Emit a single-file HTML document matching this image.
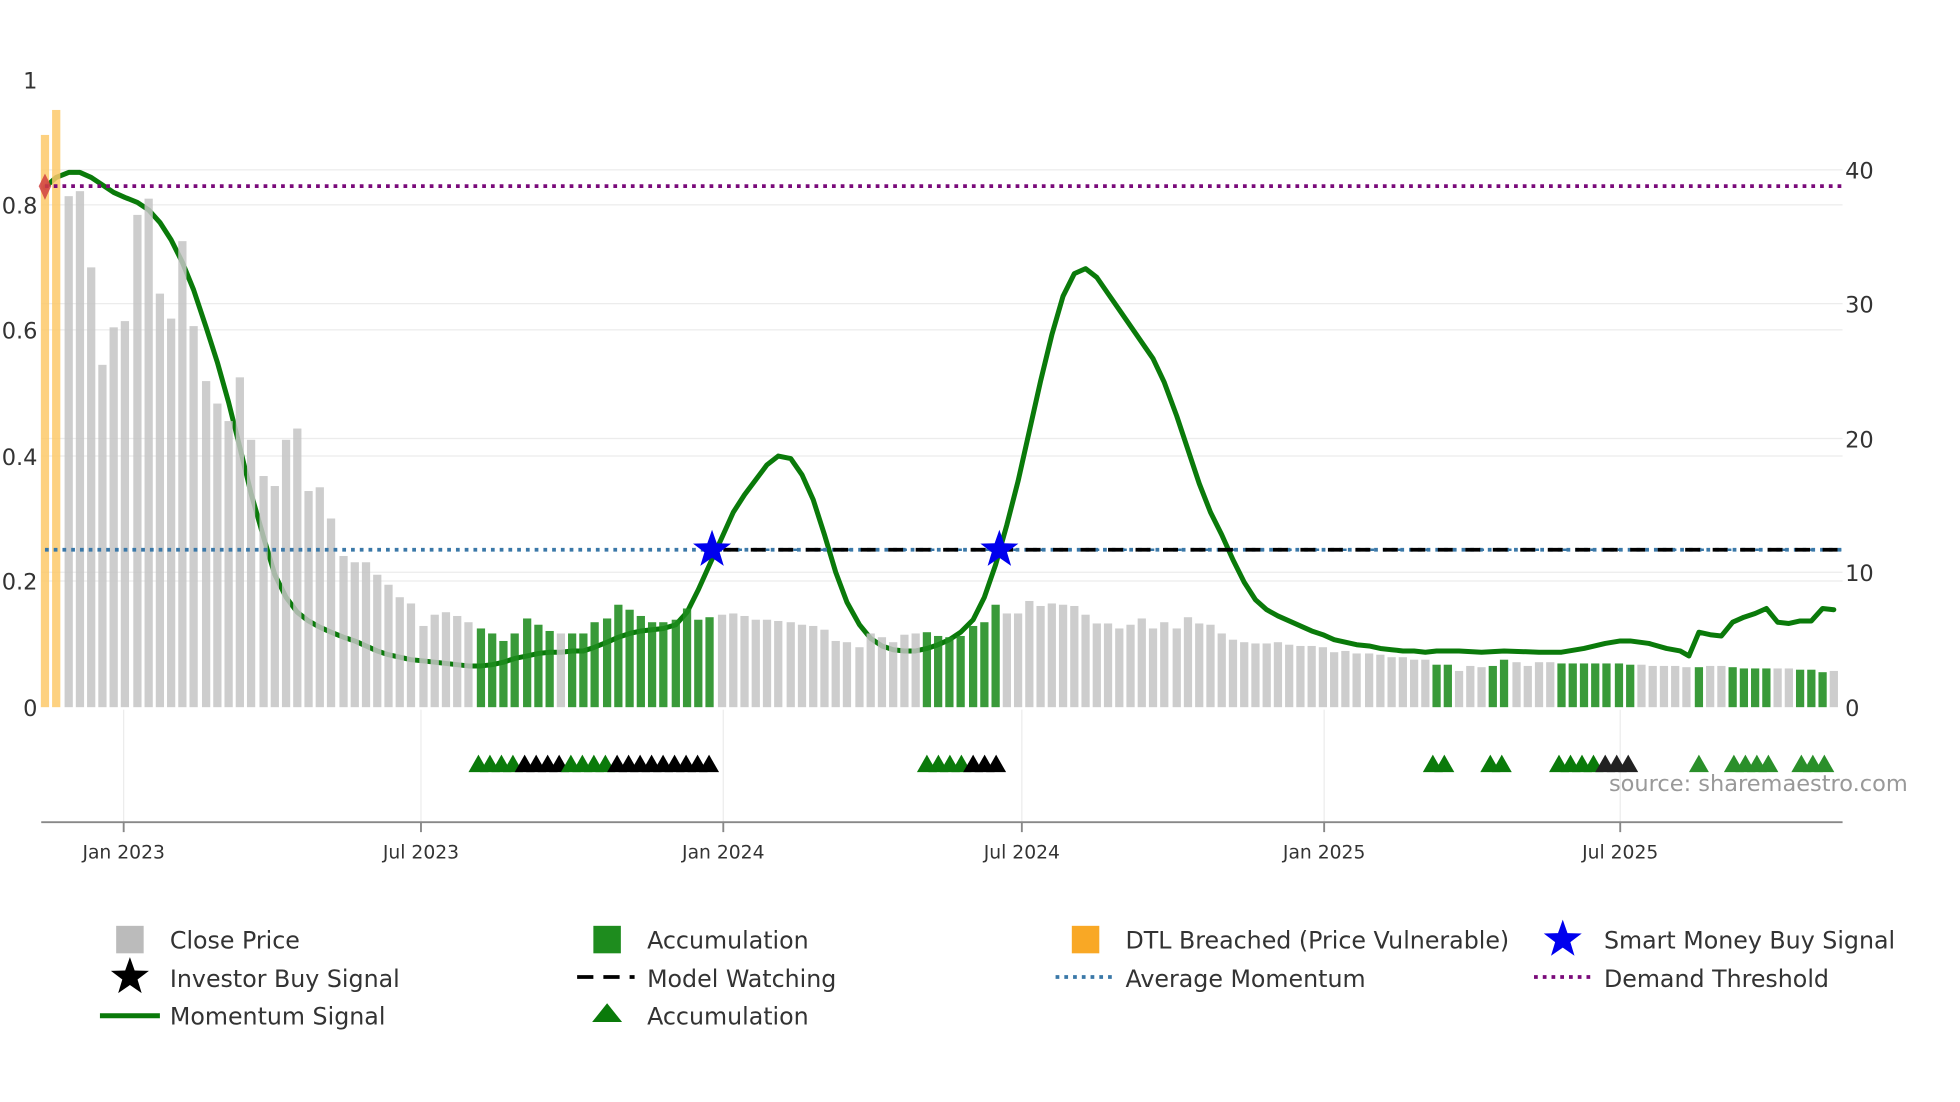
<!DOCTYPE html>
<html><head><meta charset="utf-8"><style>
html,body{margin:0;padding:0;background:#fff;}
svg{display:block;}
text{font-family:"DejaVu Sans","Liberation Sans",sans-serif;fill:#333;}
</style></head><body>
<svg id="s" width="1960" height="1102" viewBox="0 0 1569 882" preserveAspectRatio="none" xmlns="http://www.w3.org/2000/svg">
<g stroke="#ececec" stroke-width="1">
<line x1="33" x2="1475" y1="136" y2="136"/><line x1="33" x2="1475" y1="164" y2="164"/>
<line x1="33" x2="1475" y1="243" y2="243"/><line x1="33" x2="1475" y1="264" y2="264"/>
<line x1="33" x2="1475" y1="351" y2="351"/><line x1="33" x2="1475" y1="365" y2="365"/>
<line x1="33" x2="1475" y1="458" y2="458"/><line x1="33" x2="1475" y1="465" y2="465"/>
<line x1="99" x2="99" y1="568" y2="658"/><line x1="337" x2="337" y1="568" y2="658"/>
<line x1="579" x2="579" y1="568" y2="658"/><line x1="818" x2="818" y1="568" y2="658"/>
<line x1="1060" x2="1060" y1="568" y2="658"/><line x1="1297" x2="1297" y1="568" y2="658"/>
</g>
<g id="line"></g>
<g id="bars"></g>
<line x1="36" x2="1475" y1="149" y2="149" stroke="#7a0a7a" stroke-width="3" stroke-dasharray="3,4"/>
<line x1="36" x2="1475" y1="440" y2="440" stroke="#3a78a8" stroke-width="3" stroke-dasharray="3,4"/>
<line x1="579" x2="1475" y1="440" y2="440" stroke="#000" stroke-width="3" stroke-dasharray="12,10"/>
<line x1="579" x2="1475" y1="440" y2="440" stroke="#3a78a8" stroke-width="2" stroke-dasharray="3,19" stroke-dashoffset="-12"/>
<polygon points="36,139 41,149 36,160 31,149" fill="#d04040" opacity="0.85"/>
<g id="stars"></g>
<g id="tri"></g>
<line x1="33" x2="1475" y1="658" y2="658" stroke="#888" stroke-width="1.5"/>
<g stroke="#888" stroke-width="1.5">
<line x1="99" x2="99" y1="658" y2="666"/><line x1="337" x2="337" y1="658" y2="666"/>
<line x1="579" x2="579" y1="658" y2="666"/><line x1="818" x2="818" y1="658" y2="666"/>
<line x1="1060" x2="1060" y1="658" y2="666"/><line x1="1297" x2="1297" y1="658" y2="666"/>
</g>
<g font-size="15" text-anchor="middle">
<text x="99" y="687">Jan 2023</text><text x="337" y="687">Jul 2023</text>
<text x="579" y="687">Jan 2024</text><text x="818" y="687">Jul 2024</text>
<text x="1060" y="687">Jan 2025</text><text x="1297" y="687">Jul 2025</text>
</g>
<g font-size="18" text-anchor="end">
<text x="30" y="71">1</text><text x="30" y="171">0.8</text><text x="30" y="271">0.6</text>
<text x="30" y="372">0.4</text><text x="30" y="472">0.2</text><text x="30" y="573">0</text>
</g>
<g font-size="18">
<text x="1477" y="143">40</text><text x="1477" y="250">30</text><text x="1477" y="358">20</text>
<text x="1477" y="465">10</text><text x="1477" y="573">0</text>
</g>
<text x="1288" y="633" font-size="18" style="fill:#999">source: sharemaestro.com</text>
<g font-size="19">
<rect x="93" y="741" width="22" height="22" fill="#bbb"/><text x="136" y="759">Close Price</text>
<polygon id="bs" points="" fill="#000"/><text x="136" y="790">Investor Buy Signal</text>
<line x1="80" x2="128" y1="813" y2="813" stroke="#0a7a0a" stroke-width="4"/><text x="136" y="820">Momentum Signal</text>
<rect x="475" y="741" width="22" height="22" fill="#1e8c1e"/><text x="518" y="759">Accumulation</text>
<line x1="462" x2="508" y1="782" y2="782" stroke="#000" stroke-width="3" stroke-dasharray="13,8"/><text x="518" y="790">Model Watching</text>
<polygon points="486,803 498,818 474,818" fill="#0a7a0a"/><text x="518" y="820">Accumulation</text>
<rect x="858" y="741" width="22" height="22" fill="#f9a825"/><text x="901" y="759">DTL Breached (Price Vulnerable)</text>
<line x1="845" x2="890" y1="782" y2="782" stroke="#3a78a8" stroke-width="3" stroke-dasharray="3,4"/><text x="901" y="790">Average Momentum</text>
<text x="1284" y="759">Smart Money Buy Signal</text>
<line x1="1228" x2="1273" y1="782" y2="782" stroke="#7a0a7a" stroke-width="3" stroke-dasharray="3,4"/><text x="1284" y="790">Demand Threshold</text>
</g>
</svg>
<script>
var NS="http://www.w3.org/2000/svg";
function el(t,a,p){var e=document.createElementNS(NS,t);for(var k in a)e.setAttribute(k,a[k]);p.appendChild(e);return e;}
function star(cx,cy,r){var p=[];for(var i=0;i<10;i++){var a=-Math.PI/2+i*Math.PI/5;var rr=i%2?r*0.4:r;p.push((cx+rr*Math.cos(a)).toFixed(1)+","+(cy+rr*Math.sin(a)).toFixed(1));}return p.join(" ");}
var B=[[36,108,'o'],[45,88,'o'],[55,157],[64,153],[73,214],[82,292],[91,262],[100,257],[110,172],[119,159],[128,235],[137,255],[146,193],[155,261],[165,305],[174,323],[183,337],[192,302],[201,352],[211,381],[220,389],[229,352],[238,343],[247,393],[256,390],[265,415],[275,445],[284,450],[293,450],[302,460],[311,468],[320,478],[329,483],[339,501],[348,492],[357,490],[366,493],[375,498],[385,503,'G'],[394,507,'G'],[403,513,'G'],[412,507,'G'],[422,495,'G'],[431,500,'G'],[440,505,'G'],[449,507],[458,507,'G'],[467,507,'G'],[476,498,'G'],[486,495,'G'],[495,484,'G'],[504,488,'G'],[513,493,'G'],[522,498,'G'],[531,498,'G'],[541,496,'G'],[550,487,'G'],[559,496,'G'],[568,494,'G'],[578,492],[587,491],[596,493],[605,496],[614,496],[623,497],[633,498],[642,500],[651,501],[660,504],[669,513],[678,514],[688,518],[697,507],[706,510],[715,514],[724,508],[733,507],[742,506,'G'],[751,509,'G'],[760,510,'G'],[769,509,'G'],[779,501,'G'],[788,498,'G'],[797,484,'G'],[806,491],[815,491],[824,481],[833,485],[842,483],[851,484],[860,485],[869,492],[878,499],[887,499],[896,503],[905,500],[914,495],[923,503],[932,498],[942,503],[951,494],[960,499],[969,500],[978,507],[987,512],[996,514],[1005,515],[1014,515],[1023,514],[1032,516],[1041,517],[1050,517],[1059,518],[1068,522],[1077,521],[1086,523],[1096,523],[1105,524],[1114,526],[1123,526],[1132,528],[1141,528],[1150,532,'G'],[1159,532,'G'],[1168,537],[1177,533],[1186,534],[1195,533,'G'],[1204,528,'G'],[1214,530],[1223,533],[1232,530],[1241,530],[1250,531,'G'],[1259,531,'G'],[1268,531,'G'],[1277,531,'G'],[1286,531,'G'],[1296,531,'G'],[1305,532,'G'],[1314,532],[1323,533],[1332,533],[1341,533],[1350,534],[1360,534,'G'],[1369,533],[1378,533],[1387,534,'G'],[1396,535,'G'],[1405,535,'G'],[1414,535,'G'],[1423,535],[1432,535],[1441,536,'G'],[1450,536,'G'],[1459,538,'G'],[1468,537]];
var bg=document.getElementById('bars');
B.forEach(function(b){var c=b[2]=='o'?'#fdc96a':b[2]=='G'?'#1e8c1e':'#c4c4c4';var op=b[2]=='G'?0.88:0.85;el('rect',{x:b[0]-3.3,y:b[1],width:6.6,height:566-b[1],fill:c,opacity:op},bg);});
var L=[[36,150],[45,142],[55,138],[64,138],[73,142],[82,148],[91,154],[100,158],[110,162],[119,168],[128,178],[137,192],[146,210],[155,232],[165,262],[174,290],[183,322],[192,358],[201,395],[211,430],[220,460],[229,478],[238,490],[247,497],[256,502],[265,506],[275,510],[284,513],[293,517],[302,521],[311,524],[320,526],[329,528],[339,529],[348,530],[357,531],[366,532],[375,533],[385,533],[394,532],[403,530],[412,527],[422,525],[431,523],[440,522],[449,522],[458,521],[467,521],[476,518],[486,514],[495,510],[504,507],[513,505],[522,504],[531,503],[541,500],[550,490],[559,472],[568,452],[578,430],[587,410],[596,396],[605,384],[614,372],[623,365],[633,367],[642,380],[651,400],[660,428],[669,458],[678,482],[688,500],[697,511],[706,517],[715,520],[724,521],[733,521],[742,519],[751,516],[760,512],[769,506],[779,496],[788,478],[797,452],[806,420],[815,385],[824,345],[833,305],[842,268],[851,237],[860,219],[869,215],[878,222],[887,235],[896,248],[905,261],[914,274],[923,287],[932,306],[942,333],[951,360],[960,387],[969,410],[978,428],[987,448],[996,466],[1005,480],[1014,488],[1023,493],[1032,497],[1041,501],[1050,505],[1059,508],[1068,512],[1077,514],[1086,516],[1096,517],[1105,519],[1114,520],[1123,521],[1132,521],[1141,522],[1150,521],[1168,521],[1186,522],[1204,521],[1232,522],[1250,522],[1268,519],[1285,515],[1297,513],[1305,513],[1320,515],[1334,519],[1345,521],[1352,525],[1360,506],[1369,508],[1378,509],[1387,498],[1396,494],[1405,491],[1414,487],[1423,498],[1432,499],[1441,497],[1450,497],[1459,487],[1468,488]];
el('polyline',{points:L.map(function(p){return p.join(',')}).join(' '),fill:'none',stroke:'#0a7a0a','stroke-width':4,'stroke-linejoin':'round','stroke-linecap':'round'},document.getElementById('line'));
var sg=document.getElementById('stars');
el('polygon',{points:star(570,440,16),fill:'#0000ee'},sg);el('polygon',{points:star(800,440,16),fill:'#0000ee'},sg);
el('polygon',{points:star(1251,752,16),fill:'#0000ee'},document.getElementById('s'));
document.getElementById('bs').setAttribute('points',star(104,782,16));
var tg=document.getElementById('tri');
function tris(x0,x1,c){for(var x=x0;x<=x1+0.1;x+=9.2){el('polygon',{points:(x-8)+',618 '+x+',604 '+(x+8)+',618',fill:c},tg);}}
tris(383,411,'#0a7a0a');tris(420,448,'#000');tris(457,485,'#0a7a0a');tris(494,575,'#000');
tris(742,770,'#0a7a0a');tris(779,805,'#000');
tris(1147,1160,'#0a7a0a');tris(1193,1206,'#0a7a0a');tris(1248,1276,'#0a7a0a');tris(1285,1308,'#222');
tris(1360,1360,'#2a8f2a');tris(1388,1416,'#2a8f2a');tris(1442,1462,'#2a8f2a');
</script>
</body></html>
